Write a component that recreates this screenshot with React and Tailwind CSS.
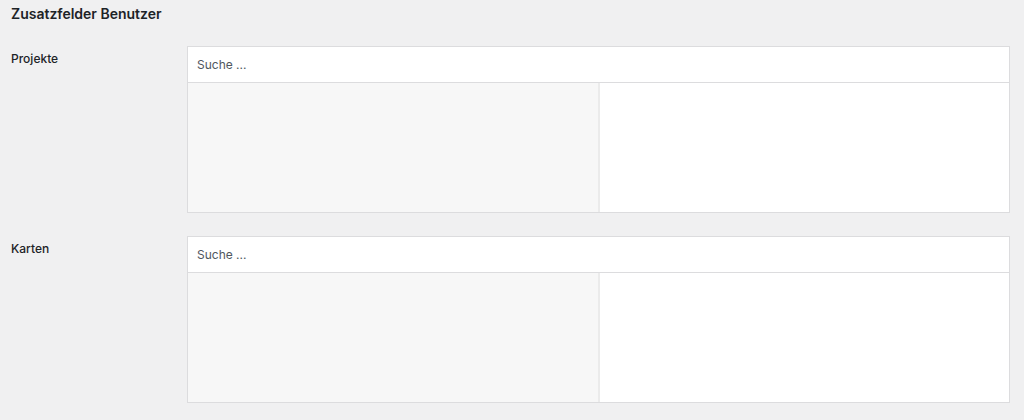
import React from "react";

const FieldRow = ({ label }) => {
  return (
    <div className="flex">
      {/* Label */}
      <div className="w-[176px] shrink-0 pt-[5px] text-[12px] leading-[16px] font-medium text-[#1d2327]">
        {label}
      </div>

      {/* Relationship box */}
      <div className="w-[823px] border border-[#dcdcde] bg-white">
        <div className="h-[36px] flex items-center px-[9px] border-b border-[#dcdcde] text-[12px] text-[#50575e]">
          Suche ...
        </div>
        <div className="flex h-[129px]">
          <div className="w-[412px] bg-[#f7f7f7] border-r-2 border-[#ebebeb]" />
          <div className="flex-1 bg-white" />
        </div>
      </div>
    </div>
  );
};

export default function App() {
  return (
    <div
      className="min-h-[420px] w-[1024px] bg-[#f0f0f1] pl-[11px] pt-[4px]"
      style={{ fontFamily: "Inter, 'Liberation Sans', sans-serif" }}
    >
      {/* Section title */}
      <h2 className="text-[14px] leading-[20px] font-semibold text-[#1d2327]">
        Zusatzfelder Benutzer
      </h2>

      <div className="mt-[22px] flex flex-col gap-[23px]">
        <FieldRow label="Projekte" />
        <FieldRow label="Karten" />
      </div>
    </div>
  );
}
